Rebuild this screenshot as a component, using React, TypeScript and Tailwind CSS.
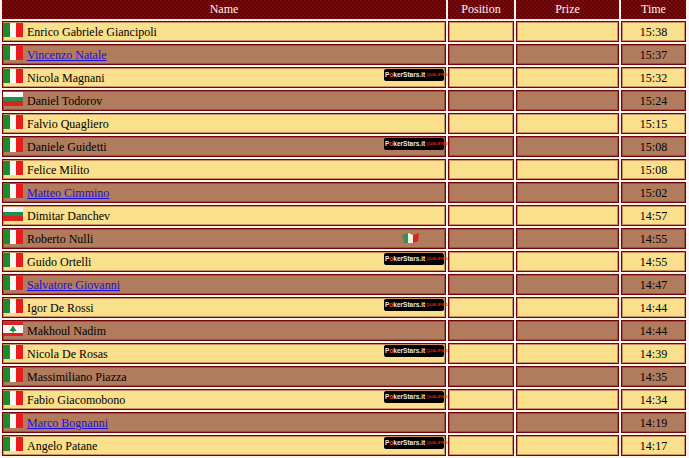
import React from "react";

type Row = { flag: "it" | "bg" | "lb"; name: string; link?: boolean; badge?: "ps" | "it"; time: string };

const rows: Row[] = [
  { flag: "it", name: "Enrico Gabriele Giancipoli", time: "15:38" },
  { flag: "it", name: "Vincenzo Natale", link: true, time: "15:37" },
  { flag: "it", name: "Nicola Magnani", badge: "ps", time: "15:32" },
  { flag: "bg", name: "Daniel Todorov", time: "15:24" },
  { flag: "it", name: "Falvio Quagliero", time: "15:15" },
  { flag: "it", name: "Daniele Guidetti", badge: "ps", time: "15:08" },
  { flag: "it", name: "Felice Milito", time: "15:08" },
  { flag: "it", name: "Matteo Cimmino", link: true, time: "15:02" },
  { flag: "bg", name: "Dimitar Danchev", time: "14:57" },
  { flag: "it", name: "Roberto Nulli", badge: "it", time: "14:55" },
  { flag: "it", name: "Guido Ortelli", badge: "ps", time: "14:55" },
  { flag: "it", name: "Salvatore Giovanni", link: true, time: "14:47" },
  { flag: "it", name: "Igor De Rossi", badge: "ps", time: "14:44" },
  { flag: "lb", name: "Makhoul Nadim", time: "14:44" },
  { flag: "it", name: "Nicola De Rosas", badge: "ps", time: "14:39" },
  { flag: "it", name: "Massimiliano Piazza", time: "14:35" },
  { flag: "it", name: "Fabio Giacomobono", badge: "ps", time: "14:34" },
  { flag: "it", name: "Marco Bognanni", link: true, time: "14:19" },
  { flag: "it", name: "Angelo Patane", badge: "ps", time: "14:17" },
];

function Flag({ kind }: { kind: Row["flag"] }) {
  return (
    <svg width="20" height="14" viewBox="0 0 20 14" className="block shrink-0">
      {kind === "it" && (
        <>
          <rect width="7" height="14" fill="#1f8a2c" />
          <rect x="7" width="6" height="14" fill="#f8f8f4" />
          <rect x="13" width="7" height="14" fill="#e81c1c" />
        </>
      )}
      {kind === "bg" && (
        <>
          <rect width="20" height="5" fill="#f8f8f8" />
          <rect y="5" width="20" height="4" fill="#1d8f4e" />
          <rect y="9" width="20" height="5" fill="#d8261c" />
        </>
      )}
      {kind === "lb" && (
        <>
          <rect width="20" height="14" fill="#f6f6f6" />
          <rect width="20" height="3" fill="#dd2222" />
          <rect y="11" width="20" height="3" fill="#dd2222" />
          <path d="M10 3.5 L13.5 9 H10.8 V10.5 H9.2 V9 H6.5 Z" fill="#1d8a3c" />
        </>
      )}
    </svg>
  );
}

function PokerStars() {
  return (
    <span className="absolute right-px top-px flex h-3 w-[60px] items-center whitespace-nowrap rounded-[2px] bg-black pl-[1px] font-['Liberation_Sans',sans-serif] text-[6.5px] font-bold leading-none text-[#e8e8e8]">
      P<span className="text-[#e23a3a]">o</span>kerStars.it
      <span className="ml-[1px] text-[4px] text-[#e01818]">QUALIFIED</span>
    </span>
  );
}

function SmallFlag() {
  return (
    <svg width="19" height="12" viewBox="0 0 19 12" className="absolute right-[25px] top-[3px]">
      <path d="M1 3 L7 1 L7 11 L3 11 Z" fill="#3d8f4a" />
      <path d="M7 1 L12 3 L12 11 L7 11 Z" fill="#f2f2ea" />
      <path d="M12 3 L18 1 L17 9 L12 11 Z" fill="#d8261c" />
    </svg>
  );
}

const cell = "border border-solid border-[#6e0508] p-0 shadow-[inset_0_0_0_1px_rgba(110,5,8,0.35)]";

export default function App() {
  return (
    <div className="h-[458px] w-[689px] overflow-hidden bg-[#fff2f2] font-['Liberation_Serif',serif] text-[12px] text-black">
      <table className="-mt-[2px] w-[688px] table-fixed border-separate border-spacing-x-[2px] border-spacing-y-[2px]">
        <colgroup>
          <col className="w-[444px]" />
          <col className="w-[66px]" />
          <col className="w-[103px]" />
          <col className="w-[65px]" />
        </colgroup>
        <thead>
          <tr className="h-[19px]">
            {["Name", "Position", "Prize", "Time"].map((h) => (
              <th
                key={h}
                className="bg-[#6e0508] bg-[repeating-conic-gradient(#7c0a0e_0_25%,#600305_0_50%)] bg-[length:4px_4px] p-0 text-center text-[12px] font-normal leading-[17px] text-[#fff2f2]"
              >
                {h}
              </th>
            ))}
          </tr>
        </thead>
        <tbody>
          {rows.map((r, i) => {
            const bg = i % 2 === 0 ? "bg-[#fadf8c]" : "bg-[#b17c5e]";
            return (
              <tr key={i} className="h-[21px]">
                <td className={`${cell} ${bg}`}>
                  <div className="relative flex h-[19px] items-center gap-[4px]">
                    <span className="-mt-[4px]">
                      <Flag kind={r.flag} />
                    </span>
                    {r.link ? (
                      <a className="mt-px text-[#1a0ddb] underline" href="#">{r.name}</a>
                    ) : (
                      <span className="mt-px">{r.name}</span>
                    )}
                    {r.badge === "ps" && <PokerStars />}
                    {r.badge === "it" && <SmallFlag />}
                  </div>
                </td>
                <td className={`${cell} ${bg}`} />
                <td className={`${cell} ${bg}`} />
                <td className={`${cell} ${bg} pt-px text-center leading-[18px]`}>{r.time}</td>
              </tr>
            );
          })}
        </tbody>
      </table>
    </div>
  );
}
